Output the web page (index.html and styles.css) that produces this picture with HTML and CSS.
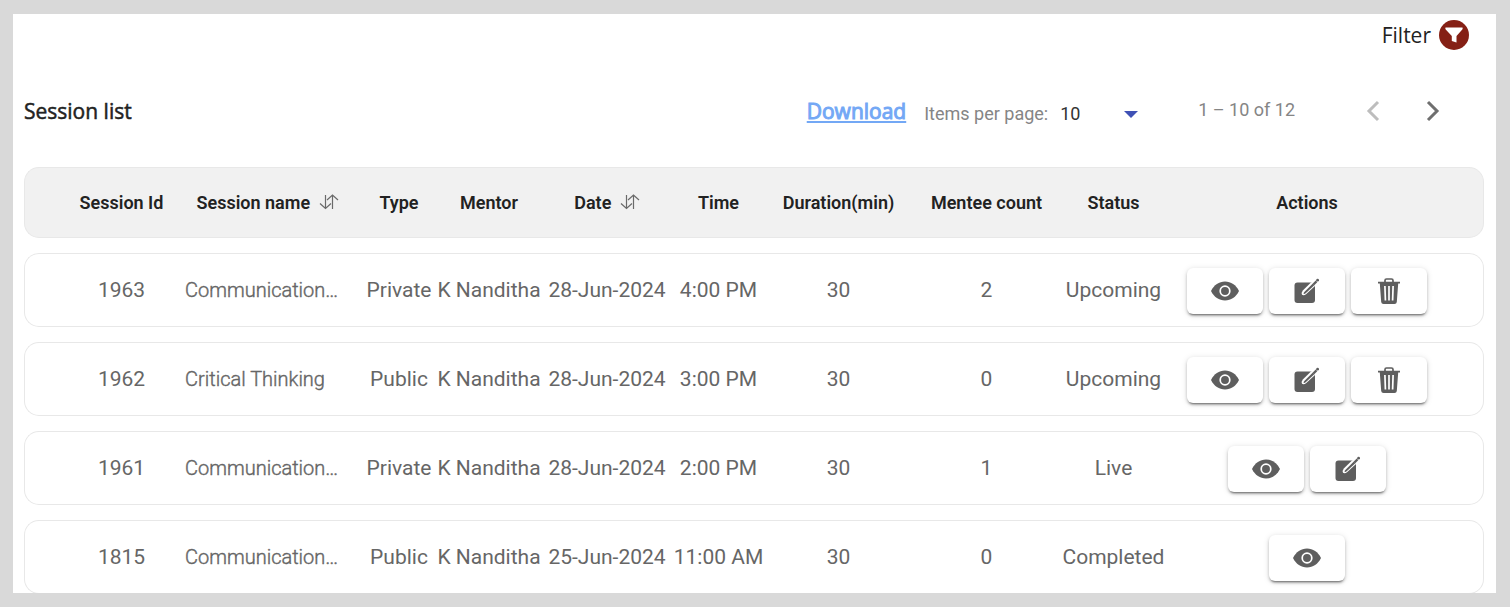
FILE: index.html
```html
<!DOCTYPE html>
<html lang="en">
<head>
<meta charset="utf-8">
<title>Session list</title>
<link rel="stylesheet" href="styles.css">
</head>
<body>
<svg class="sprite" aria-hidden="true">
  <symbol id="sort" viewBox="0 0 20 16"><path d="M6.500 1v13.500M1 9.500l5.500 5 5.500-5M13.500 15V1.500M8 6l5.500-5 5.500 5" fill="none" stroke="#6a6a6a" stroke-width="1.200"/></symbol>
  <symbol id="eye" viewBox="0 0 28 20"><path d="M0 10C3 4 8 .5 14 .5S25 4 28 10C25 16 20 19.500 14 19.500S3 16 0 10z" fill="#5e5e5e"/><circle cx="14" cy="10" r="4.800" fill="#5e5e5e" stroke="#fff" stroke-width="1.700"/></symbol>
  <symbol id="edit" viewBox="0 0 26 26"><rect x="0.500" y="4.500" width="20.500" height="20.500" rx="3" fill="#5e5e5e"/><path d="M22.500 1.500L17 4.500 8.800 12.600q-1.800 2.400-.8 4.200 1.800 1.200 4.300-.8L21 8 24 3z" fill="#fff"/><path d="M18.800 5.600L10.300 14q-1 1.200-.6 1.900.9.300 2-.7L20.600 6.900z" fill="#5e5e5e"/><path d="M19.500 6.400l3-3" stroke="#5e5e5e" stroke-width="2.200"/><circle cx="23.600" cy="2.200" r="1.400" fill="#5e5e5e"/></symbol>
  <symbol id="trash" viewBox="0 0 22 26"><path d="M7 4V2.500Q7 1 8.500 1h5Q15 1 15 2.500V4" fill="none" stroke="#5e5e5e" stroke-width="1.700"/><path d="M0 3.700h22v1.800H20.200L18.800 24q-.2 2-2.300 2h-11q-2.100 0-2.300-2L1.800 5.500H0z" fill="#5e5e5e"/><path d="M6.900 8l.5 14.500M11 8v14.500M15.100 8l-.5 14.500" stroke="#fff" stroke-width="1.700"/></symbol>
</svg>
<main class="panel">
  <div class="filter-bar">
    <button class="filter" type="button">Filter
      <svg class="filter-icon" viewBox="0 0 30 30"><circle cx="15" cy="15" r="15" fill="#852015"/><path d="M6.500 7.500h17q.5 1-.2 2L17.500 16v6.500L12.800 21v-5L6.700 9.500q-.7-1-.2-2z" fill="#fff"/></svg>
    </button>
  </div>
  <header class="toolbar">
    <h1 class="title">Session list</h1>
    <a class="download" href="#">Download</a>
    <label class="per-page" for="page-size">Items per page:</label>
    <span class="select-wrap">
      <select class="page-size" id="page-size"><option>10</option><option>25</option></select>
      <svg class="caret" viewBox="0 0 14 7"><path d="M0 0h14L7 7z" fill="#3f51b5"/></svg>
    </span>
    <span class="range">1 – 10 of 12</span>
    <button class="page-button" type="button" aria-label="Previous page" disabled><svg class="chevron" viewBox="0 0 14 22"><path d="M12 2L3 11l9 9" fill="none" stroke="#bdbdbd" stroke-width="3"/></svg></button>
    <button class="page-button" type="button" aria-label="Next page"><svg class="chevron" viewBox="0 0 14 22"><path d="M2 2l9 9-9 9" fill="none" stroke="#6f6f6f" stroke-width="3"/></svg></button>
  </header>
  <table class="sessions">
    <colgroup><col class="c-id"><col class="c-name"><col class="c-type"><col class="c-mentor"><col class="c-date"><col class="c-time"><col class="c-duration"><col class="c-count"><col class="c-status"><col class="c-actions"></colgroup>
    <thead>
      <tr><th class="id">Session Id</th><th class="name">Session name <svg class="sort"><use href="#sort"/></svg></th><th>Type</th><th>Mentor</th><th>Date <svg class="sort"><use href="#sort"/></svg></th><th>Time</th><th>Duration(min)</th><th>Mentee count</th><th>Status</th><th class="actions">Actions</th></tr>
    </thead>
    <tbody>
      <tr><td class="id">1963</td><td class="name">Communication…</td><td>Private</td><td>K Nanditha</td><td>28-Jun-2024</td><td>4:00 PM</td><td>30</td><td>2</td><td>Upcoming</td><td class="actions"><div class="buttons"><button class="action" type="button" aria-label="View"><svg class="eye"><use href="#eye"/></svg></button><button class="action" type="button" aria-label="Edit"><svg class="edit"><use href="#edit"/></svg></button><button class="action" type="button" aria-label="Delete"><svg class="trash"><use href="#trash"/></svg></button></div></td></tr>
      <tr><td class="id">1962</td><td class="name">Critical Thinking</td><td>Public</td><td>K Nanditha</td><td>28-Jun-2024</td><td>3:00 PM</td><td>30</td><td>0</td><td>Upcoming</td><td class="actions"><div class="buttons"><button class="action" type="button" aria-label="View"><svg class="eye"><use href="#eye"/></svg></button><button class="action" type="button" aria-label="Edit"><svg class="edit"><use href="#edit"/></svg></button><button class="action" type="button" aria-label="Delete"><svg class="trash"><use href="#trash"/></svg></button></div></td></tr>
      <tr><td class="id">1961</td><td class="name">Communication…</td><td>Private</td><td>K Nanditha</td><td>28-Jun-2024</td><td>2:00 PM</td><td>30</td><td>1</td><td>Live</td><td class="actions"><div class="buttons"><button class="action" type="button" aria-label="View"><svg class="eye"><use href="#eye"/></svg></button><button class="action" type="button" aria-label="Edit"><svg class="edit"><use href="#edit"/></svg></button></div></td></tr>
      <tr><td class="id">1815</td><td class="name">Communication…</td><td>Public</td><td>K Nanditha</td><td>25-Jun-2024</td><td>11:00 AM</td><td>30</td><td>0</td><td>Completed</td><td class="actions"><div class="buttons"><button class="action" type="button" aria-label="View"><svg class="eye"><use href="#eye"/></svg></button></div></td></tr>
    </tbody>
  </table>
</main>
</body>
</html>
```
FILE: styles.css
```css
* { box-sizing: border-box; }
body { margin: 0; padding: 14px 14px 14px 13px; background: #d9d9d9; font-family: Roboto, sans-serif; color: #222; }
button { border: 0; background: none; padding: 0; font: inherit; color: inherit; cursor: pointer; }
.sprite { position: absolute; width: 0; height: 0; }
.panel { background: #fff; padding: 0 12px 0 11px; overflow: hidden; }
.filter-bar { display: flex; justify-content: flex-end; padding: 6px 15px 0 0; }
.filter { display: flex; align-items: center; gap: 8px; font: 21px/30px "Open Sans", sans-serif; }
.filter-icon { width: 30px; height: 30px; }
.toolbar { display: flex; align-items: center; height: 60px; margin: 31px 0 11px; }
.title { margin: 0 auto 0 0; font: 400 21px/30px "Open Sans", sans-serif; -webkit-text-stroke: 0.5px; }
.download { margin-right: 18px; font: 400 21px/30px "Open Sans", sans-serif; -webkit-text-stroke: 1px; color: #73a8f5; text-decoration-thickness: 2px; text-underline-offset: 2px; }
.per-page { padding-top: 5px; font-size: 18px; color: #858585; }
.select-wrap { position: relative; width: 82px; margin: 6px 0 0 10px; }
.page-size { width: 100%; padding: 0 2px; border: 0; appearance: none; background: none; font: 18px/22px Roboto, sans-serif; color: #333; }
.caret { position: absolute; right: 2px; top: 8px; width: 14px; height: 7px; pointer-events: none; }
.range { margin: 0 48px 0 58px; padding-bottom: 3px; font-size: 18px; color: #858585; }
.page-button { display: flex; justify-content: center; align-items: center; width: 60px; height: 40px; }
.page-button:last-child { margin-right: 21px; }
.chevron { width: 14px; height: 22px; }
.sessions { width: 100%; table-layout: fixed; border-collapse: separate; border-spacing: 0 15px; margin: 0 0 -16px; }
.c-id { width: 156px; }
.c-name { width: 182px; }
.c-type { width: 74px; }
.c-mentor { width: 106px; }
.c-date { width: 130px; }
.c-time { width: 93px; }
.c-duration { width: 147px; }
.c-count { width: 149px; }
.c-status { width: 105px; }
.c-actions { width: 318px; }
th, td { padding: 0; border: solid #e8e8e8; border-width: 1px 0; text-align: center; white-space: nowrap; }
th { height: 71px; background: #f1f1f1; font-size: 18px; font-weight: 600; }
td { height: 74px; font-size: 21px; color: #666; }
th:first-child, td:first-child { border-left-width: 1px; border-radius: 15px 0 0 15px; }
th:last-child, td:last-child { border-right-width: 1px; border-radius: 0 15px 15px 0; }
.id { padding-left: 38px; }
th.name { padding-right: 7px; }
td.name { padding-left: 5px; text-align: left; font-size: 20px; font-weight: 300; -webkit-text-stroke: 0.4px; }
.actions { padding-right: 35px; }
.sort { width: 20px; height: 16px; margin-left: 4px; vertical-align: -1px; }
.buttons { display: flex; justify-content: center; gap: 6px; padding-top: 1px; }
.action { display: flex; align-items: center; justify-content: center; width: 76px; height: 46px; background: #fff; border-radius: 6px; box-shadow: 0 3px 2px -2px #0006, 0 2px 3px #0003, 0 1px 6px #0002; }
.eye { width: 28px; height: 20px; }
.edit { width: 26px; height: 26px; }
.trash { width: 22px; height: 26px; }
```
